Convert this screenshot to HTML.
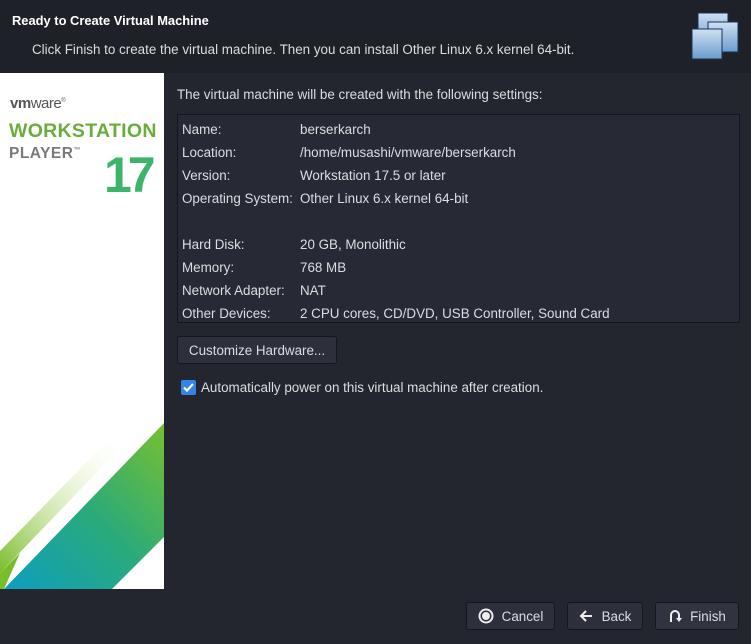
<!DOCTYPE html>
<html><head><style>
body{margin:0;width:751px;height:644px;background:#23262e;font-family:"Liberation Sans","DejaVu Sans",sans-serif;color:#dcdde0;font-size:13.4px;position:relative;overflow:hidden}
.hdr{position:absolute;left:0;top:0;width:751px;height:73px;background:#1f2128}
.abs{position:absolute;white-space:nowrap}
.side{position:absolute;left:0;top:73px;width:164px;height:516px;background:#fff;overflow:hidden}
.box{position:absolute;left:177px;top:114px;width:561px;height:207px;background:#272a35;border:1px solid #14161c}
.btn{position:absolute;height:28px;border:1px solid #15171d;border-radius:3px;background:#2d303b;color:#dcdde0;display:flex;align-items:center;justify-content:center;box-sizing:border-box;font-size:13.4px}
</style></head><body>
<div class="hdr"></div>
<div class="abs" style="left:12px;top:13px;font-weight:bold;font-size:12.9px;color:#fff">Ready to Create Virtual Machine</div>
<div class="abs" style="left:32px;top:42px">Click Finish to create the virtual machine. Then you can install Other Linux 6.x kernel 64-bit.</div>
<svg class="abs" style="left:688px;top:10px" width="52" height="52">
<defs><linearGradient id="g" x1="0" y1="0" x2="0" y2="1"><stop offset="0" stop-color="#cfe0f2"/><stop offset="1" stop-color="#6a9ccc"/></linearGradient></defs>
<rect x="10" y="3" width="30" height="30" fill="url(#g)" stroke="#16325a"/>
<rect x="20" y="12" width="30" height="30" fill="url(#g)" stroke="#16325a"/>
<rect x="4" y="19" width="30" height="30" fill="url(#g)" stroke="#16325a"/>
</svg>
<div class="side">
<div class="abs" style="left:10px;top:22px;font-size:15px;color:#555;letter-spacing:-0.5px"><b>vm</b>ware<sup style="font-size:6px">®</sup></div>
<div class="abs" style="left:9px;top:47px;font-size:19.5px;font-weight:bold;color:#6aad3c;letter-spacing:0.3px">WORKSTATION</div>
<div class="abs" style="left:9px;top:72px;font-size:15.5px;font-weight:bold;color:#7a7a7a;letter-spacing:0.5px">PLAYER<sup style="font-size:7px">™</sup></div>
<div class="abs" style="left:104px;top:73px;font-size:50px;font-weight:bold;color:#3cb46a;letter-spacing:-4px">17</div>
<svg class="abs" style="left:0;top:280px" width="164" height="236">
<defs><linearGradient id="f" x1="0" y1="1" x2="1" y2="0"><stop offset="0" stop-color="#78bd2a"/><stop offset="0.5" stop-color="#c8e4a0" stop-opacity="0.6"/><stop offset="1" stop-color="#fff" stop-opacity="0"/></linearGradient>
<linearGradient id="h" x1="0" y1="1" x2="1" y2="0"><stop offset="0" stop-color="#0d9ec0"/><stop offset="0.5" stop-color="#2aaa7a"/><stop offset="1" stop-color="#78c030"/></linearGradient></defs>
<polygon points="0,220 0,198 110,85 130,85" fill="url(#f)"/>
<polygon points="4,236 164,70 164,184 112,236" fill="url(#h)"/>
<polygon points="0,236 0,220 20,200 4,236" fill="#78bd2a"/>
</svg>
</div>
<div class="abs" style="left:177px;top:87px">The virtual machine will be created with the following settings:</div>
<div class="box"></div>
<div class="abs" style="left:182px;top:118px;line-height:23px">Name:<br>Location:<br>Version:<br>Operating System:<br><br>Hard Disk:<br>Memory:<br>Network Adapter:<br>Other Devices:</div>
<div class="abs" style="left:300px;top:118px;line-height:23px">berserkarch<br>/home/musashi/vmware/berserkarch<br>Workstation 17.5 or later<br>Other Linux 6.x kernel 64-bit<br><br>20 GB, Monolithic<br>768 MB<br>NAT<br>2 CPU cores, CD/DVD, USB Controller, Sound Card</div>
<div class="btn" style="left:177px;top:336px;width:160px">Customize Hardware...</div>
<div class="abs" style="left:181px;top:380px;width:15px;height:15px;background:#3584e4;border-radius:2px"><svg width="15" height="15"><path d="M3 7.5l3 3 6-6.5" stroke="#fff" stroke-width="2.2" fill="none"/></svg></div>
<div class="abs" style="left:201px;top:380px">Automatically power on this virtual machine after creation.</div>
<div class="btn" style="left:466px;top:602px;width:89px"><svg width="16" height="16" style="margin-right:8px"><circle cx="8" cy="8" r="6.5" fill="none" stroke="#eee" stroke-width="2"/><circle cx="8" cy="8" r="4" fill="#eee"/></svg>Cancel</div>
<div class="btn" style="left:567px;top:602px;width:76px"><svg width="14" height="14" style="margin-right:9px"><path d="M13 7H2M7 2L2 7l5 5" stroke="#eee" stroke-width="2" fill="none"/></svg>Back</div>
<div class="btn" style="left:655px;top:602px;width:84px;background:#31343f"><svg width="14" height="14" style="margin-right:8px"><path d="M3 13V6a4 4 0 0 1 8 0v4" stroke="#eee" stroke-width="2" fill="none"/><path d="M8 9l3 4 3-4z" fill="#eee"/></svg>Finish</div>
</body></html>
